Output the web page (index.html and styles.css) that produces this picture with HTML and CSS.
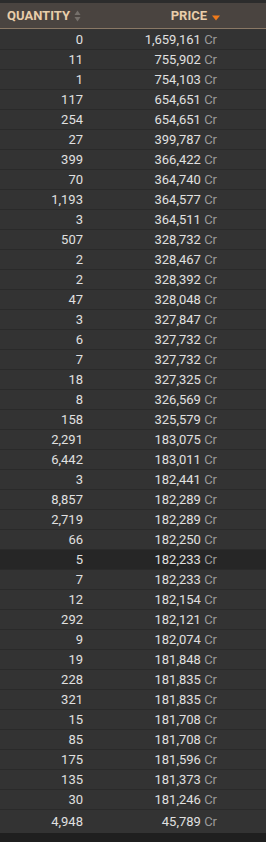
FILE: index.html
```html
<!DOCTYPE html>
<html>
<head>
<meta charset="utf-8">
<link rel="stylesheet" href="styles.css">
</head>
<body>
<div class="wrap">
<table class="market">
<thead>
<tr>
<th class="qty-h"><span class="hl">QUANTITY</span><svg class="sort" width="7" height="12" viewBox="0 0 7 12"><path d="M3.5 0.5 L6.5 5 L0.5 5 Z" fill="#75706b"/><path d="M3.5 11.5 L6.5 7 L0.5 7 Z" fill="#75706b"/></svg></th>
<th class="price-h"><span class="hl">PRICE</span><svg class="sortdn" width="8" height="6" viewBox="0 0 8 6"><path d="M0 0.5 L8 0.5 L4 5.5 Z" fill="#f07a1a"/></svg></th>
</tr>
</thead>
<tbody>
<tr><td class="q">0</td><td class="p">1,659,161 <span class="cr">Cr</span></td></tr>
<tr><td class="q">11</td><td class="p">755,902 <span class="cr">Cr</span></td></tr>
<tr><td class="q">1</td><td class="p">754,103 <span class="cr">Cr</span></td></tr>
<tr><td class="q">117</td><td class="p">654,651 <span class="cr">Cr</span></td></tr>
<tr><td class="q">254</td><td class="p">654,651 <span class="cr">Cr</span></td></tr>
<tr><td class="q">27</td><td class="p">399,787 <span class="cr">Cr</span></td></tr>
<tr><td class="q">399</td><td class="p">366,422 <span class="cr">Cr</span></td></tr>
<tr><td class="q">70</td><td class="p">364,740 <span class="cr">Cr</span></td></tr>
<tr><td class="q">1,193</td><td class="p">364,577 <span class="cr">Cr</span></td></tr>
<tr><td class="q">3</td><td class="p">364,511 <span class="cr">Cr</span></td></tr>
<tr><td class="q">507</td><td class="p">328,732 <span class="cr">Cr</span></td></tr>
<tr><td class="q">2</td><td class="p">328,467 <span class="cr">Cr</span></td></tr>
<tr><td class="q">2</td><td class="p">328,392 <span class="cr">Cr</span></td></tr>
<tr><td class="q">47</td><td class="p">328,048 <span class="cr">Cr</span></td></tr>
<tr><td class="q">3</td><td class="p">327,847 <span class="cr">Cr</span></td></tr>
<tr><td class="q">6</td><td class="p">327,732 <span class="cr">Cr</span></td></tr>
<tr><td class="q">7</td><td class="p">327,732 <span class="cr">Cr</span></td></tr>
<tr><td class="q">18</td><td class="p">327,325 <span class="cr">Cr</span></td></tr>
<tr><td class="q">8</td><td class="p">326,569 <span class="cr">Cr</span></td></tr>
<tr><td class="q">158</td><td class="p">325,579 <span class="cr">Cr</span></td></tr>
<tr><td class="q">2,291</td><td class="p">183,075 <span class="cr">Cr</span></td></tr>
<tr><td class="q">6,442</td><td class="p">183,011 <span class="cr">Cr</span></td></tr>
<tr><td class="q">3</td><td class="p">182,441 <span class="cr">Cr</span></td></tr>
<tr><td class="q">8,857</td><td class="p">182,289 <span class="cr">Cr</span></td></tr>
<tr><td class="q">2,719</td><td class="p">182,289 <span class="cr">Cr</span></td></tr>
<tr><td class="q">66</td><td class="p">182,250 <span class="cr">Cr</span></td></tr>
<tr class="hi"><td class="q">5</td><td class="p">182,233 <span class="cr">Cr</span></td></tr>
<tr><td class="q">7</td><td class="p">182,233 <span class="cr">Cr</span></td></tr>
<tr><td class="q">12</td><td class="p">182,154 <span class="cr">Cr</span></td></tr>
<tr><td class="q">292</td><td class="p">182,121 <span class="cr">Cr</span></td></tr>
<tr><td class="q">9</td><td class="p">182,074 <span class="cr">Cr</span></td></tr>
<tr><td class="q">19</td><td class="p">181,848 <span class="cr">Cr</span></td></tr>
<tr><td class="q">228</td><td class="p">181,835 <span class="cr">Cr</span></td></tr>
<tr><td class="q">321</td><td class="p">181,835 <span class="cr">Cr</span></td></tr>
<tr><td class="q">15</td><td class="p">181,708 <span class="cr">Cr</span></td></tr>
<tr><td class="q">85</td><td class="p">181,708 <span class="cr">Cr</span></td></tr>
<tr><td class="q">175</td><td class="p">181,596 <span class="cr">Cr</span></td></tr>
<tr><td class="q">135</td><td class="p">181,373 <span class="cr">Cr</span></td></tr>
<tr><td class="q">30</td><td class="p">181,246 <span class="cr">Cr</span></td></tr>
<tr class="last"><td class="q">4,948</td><td class="p">45,789 <span class="cr">Cr</span></td></tr>
</tbody>
</table>
</div>
</body>
</html>
```

FILE: styles.css
```css
html, body {
  margin: 0;
  padding: 0;
  background: #1f1f1f;
}
body {
  font-family: Roboto, "Liberation Sans", sans-serif;
  width: 266px;
  height: 842px;
  overflow: hidden;
}
.wrap {
  background: #2c2c2c;
  padding-top: 3px;
}
.market {
  width: 266px;
  border-collapse: collapse;
  table-layout: fixed;
}
.market th {
  height: 25px;
  padding: 0;
  background: #4a4440;
  border-bottom: 1px solid #8a7865;
  color: #e8cdaa;
  font-weight: 700;
  font-size: 13px;
  letter-spacing: 0;
  vertical-align: middle;
  white-space: nowrap;
}
.qty-h {
  width: 83px;
  text-align: left;
  padding-left: 7px !important;
}
.price-h {
  text-align: right;
  padding-right: 46px !important;
}
.hl {
  vertical-align: middle;
}
.sort {
  vertical-align: middle;
  margin-left: 4px;
}
.sortdn {
  vertical-align: middle;
  margin-left: 5px;
  margin-top: 3px;
}
.market td {
  height: 19px;
  padding: 0;
  background: #333333;
  border-top: 1px solid #2a2a2a;
  color: #e0e0e0;
  font-size: 13px;
  vertical-align: middle;
  white-space: nowrap;
}
.market tbody tr:first-child td {
  border-top: none;
  height: 20px;
}
.market tr.hi td {
  background: #262626;
}
.market tr.last td {
  height: 23px;
}
.q {
  text-align: right;
  padding-right: 7px !important;
}
.p {
  text-align: right;
  padding-right: 49px !important;
}
.cr {
  color: #9a9a9a;
}
```
